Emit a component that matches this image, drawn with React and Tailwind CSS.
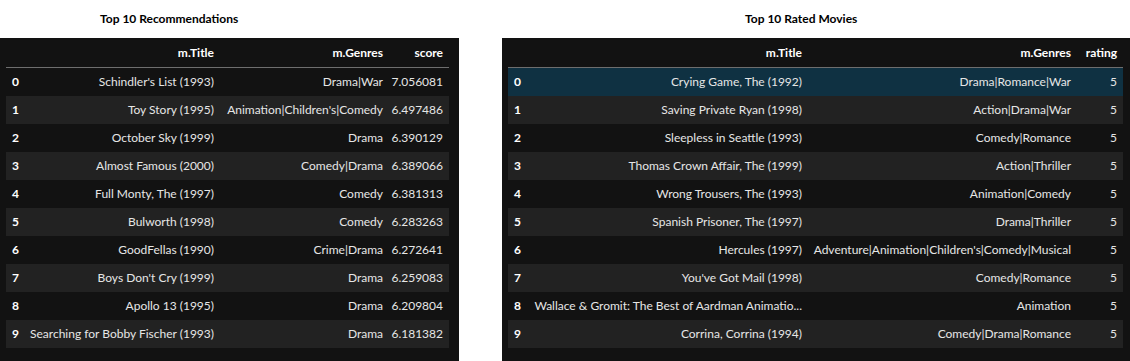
import React from 'react';

const recs = [
    ['0', "Schindler's List (1993)", 'Drama|War', '7.056081'],
    ['1', 'Toy Story (1995)', "Animation|Children's|Comedy", '6.497486'],
    ['2', 'October Sky (1999)', 'Drama', '6.390129'],
    ['3', 'Almost Famous (2000)', 'Comedy|Drama', '6.389066'],
    ['4', 'Full Monty, The (1997)', 'Comedy', '6.381313'],
    ['5', 'Bulworth (1998)', 'Comedy', '6.283263'],
    ['6', 'GoodFellas (1990)', 'Crime|Drama', '6.272641'],
    ['7', "Boys Don't Cry (1999)", 'Drama', '6.259083'],
    ['8', 'Apollo 13 (1995)', 'Drama', '6.209804'],
    ['9', 'Searching for Bobby Fischer (1993)', 'Drama', '6.181382'],
];

const rated = [
    ['0', 'Crying Game, The (1992)', 'Drama|Romance|War', '5'],
    ['1', 'Saving Private Ryan (1998)', 'Action|Drama|War', '5'],
    ['2', 'Sleepless in Seattle (1993)', 'Comedy|Romance', '5'],
    ['3', 'Thomas Crown Affair, The (1999)', 'Action|Thriller', '5'],
    ['4', 'Wrong Trousers, The (1993)', 'Animation|Comedy', '5'],
    ['5', 'Spanish Prisoner, The (1997)', 'Drama|Thriller', '5'],
    ['6', 'Hercules (1997)', "Adventure|Animation|Children's|Comedy|Musical", '5'],
    ['7', "You've Got Mail (1998)", 'Comedy|Romance', '5'],
    ['8', 'Wallace & Gromit: The Best of Aardman Animatio...', 'Animation', '5'],
    ['9', 'Corrina, Corrina (1994)', 'Comedy|Drama|Romance', '5'],
];

const DataTable = ({ cols, gridClass, rows, highlight = -1 }) => (
    <div className="text-[12px] text-[#e6e6e6]">
        {/* header */}
        <div className={`grid ${gridClass} h-[30px] items-center border-b border-[#6e6e6e] font-bold text-white`}>
            <div />
            {cols.map(c => (
                <div key={c} className="text-right pr-[6px] whitespace-nowrap">{c}</div>
            ))}
        </div>
        {rows.map((r, i) => (
            <div
                key={r[0]}
                className={`grid ${gridClass} h-[28px] items-center ${i === highlight
                    ? 'bg-[#0f3142]'
                    : i % 2 === 1 ? 'bg-[#222222]' : ''
                    }`}
            >
                <div className="pl-[6px] font-bold text-white">{r[0]}</div>
                <div className="text-right pr-[6px] whitespace-nowrap">{r[1]}</div>
                <div className="text-right pr-[6px] whitespace-nowrap">{r[2]}</div>
                <div className="text-right pr-[6px] whitespace-nowrap">{r[3]}</div>
            </div>
        ))}
    </div>
);

export default function App() {
    return (
        <div className="w-[1130px] h-[361px] bg-white flex overflow-hidden font-['Lato','Noto_Sans',sans-serif]">
            <div className="w-[459px] flex flex-col shrink-0">
                <div className="h-[38px] flex items-center pl-[100px] text-[12px] font-bold text-black">
                    Top 10 Recommendations
                </div>
                <div className="flex-1 bg-[#121212] pl-[6px]">
                    <div className="w-[443px]">
                        <DataTable
                            cols={['m.Title', 'm.Genres', 'score']}
                            gridClass="grid-cols-[19px_195px_169px_60px]"
                            rows={recs}
                        />
                    </div>
                </div>
            </div>
            <div className="w-[43px] shrink-0" />
            <div className="flex-1 flex flex-col">
                <div className="h-[38px] flex items-center pl-[243px] text-[12px] font-bold text-black">
                    Top 10 Rated Movies
                </div>
                <div className="flex-1 bg-[#121212] pl-[6px]">
                    <div className="w-[615px]">
                        <DataTable
                            cols={['m.Title', 'm.Genres', 'rating']}
                            gridClass="grid-cols-[20px_280px_269px_46px]"
                            rows={rated}
                            highlight={0}
                        />
                    </div>
                </div>
            </div>
        </div>
    );
}
